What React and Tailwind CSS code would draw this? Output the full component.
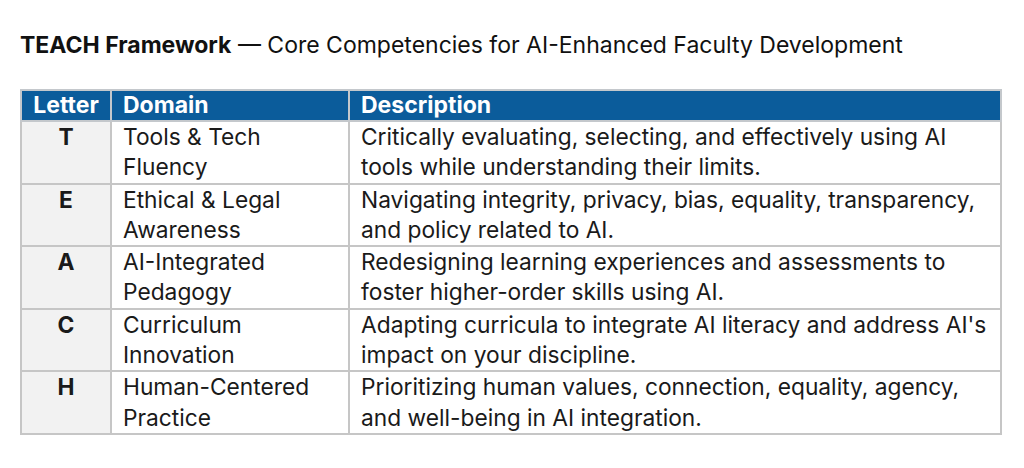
import React from 'react';

const rows = [
  { letter: 'T', domain: ['Tools & Tech', 'Fluency'], desc: ['Critically evaluating, selecting, and effectively using AI', 'tools while understanding their limits.'] },
  { letter: 'E', domain: ['Ethical & Legal', 'Awareness'], desc: ['Navigating integrity, privacy, bias, equality, transparency,', 'and policy related to AI.'] },
  { letter: 'A', domain: ['AI-Integrated', 'Pedagogy'], desc: ['Redesigning learning experiences and assessments to', 'foster higher-order skills using AI.'] },
  { letter: 'C', domain: ['Curriculum', 'Innovation'], desc: ["Adapting curricula to integrate AI literacy and address AI's", 'impact on your discipline.'] },
  { letter: 'H', domain: ['Human-Centered', 'Practice'], desc: ['Prioritizing human values, connection, equality, agency,', 'and well-being in AI integration.'] },
];

export default function App() {
  return (
    <div className="w-[1024px] h-[468px] bg-white text-[#1a1a1a] font-['Inter','Noto_Sans',sans-serif] pt-[30px] pl-[20px]">
      <h1 className="text-[23px] leading-[30px] text-[#111] whitespace-nowrap">
        <span className="font-bold">TEACH Framework</span> — Core Competencies for AI-Enhanced Faculty Development
      </h1>

      <table className="mt-[29px] w-[982px] border-collapse table-fixed">
        <colgroup>
          <col className="w-[90px]" />
          <col className="w-[238px]" />
          <col />
        </colgroup>
        <thead>
          <tr className="bg-[#0b5c9b] text-white text-[23px] font-bold leading-[29px]">
            <th className="border-2 border-[#c4c8cc] px-[6px] text-center">Letter</th>
            <th className="border-2 border-[#c4c8cc] px-[11px] text-left">Domain</th>
            <th className="border-2 border-[#c4c8cc] px-[11px] text-left">Description</th>
          </tr>
        </thead>
        <tbody className="text-[22.75px] leading-[30.3px]">
          {rows.map((r) => (
            <tr key={r.letter}>
              <td className="border-2 border-[#c6c6c6] bg-[#f2f2f2] align-top text-center font-bold">{r.letter}</td>
              <td className="border-2 border-[#c6c6c6] align-top px-[11px]">
                {r.domain.map((l) => <div key={l} className="whitespace-nowrap">{l}</div>)}
              </td>
              <td className="border-2 border-[#c6c6c6] align-top px-[11px]">
                {r.desc.map((l) => <div key={l} className="whitespace-nowrap">{l}</div>)}
              </td>
            </tr>
          ))}
        </tbody>
      </table>
    </div>
  );
}
